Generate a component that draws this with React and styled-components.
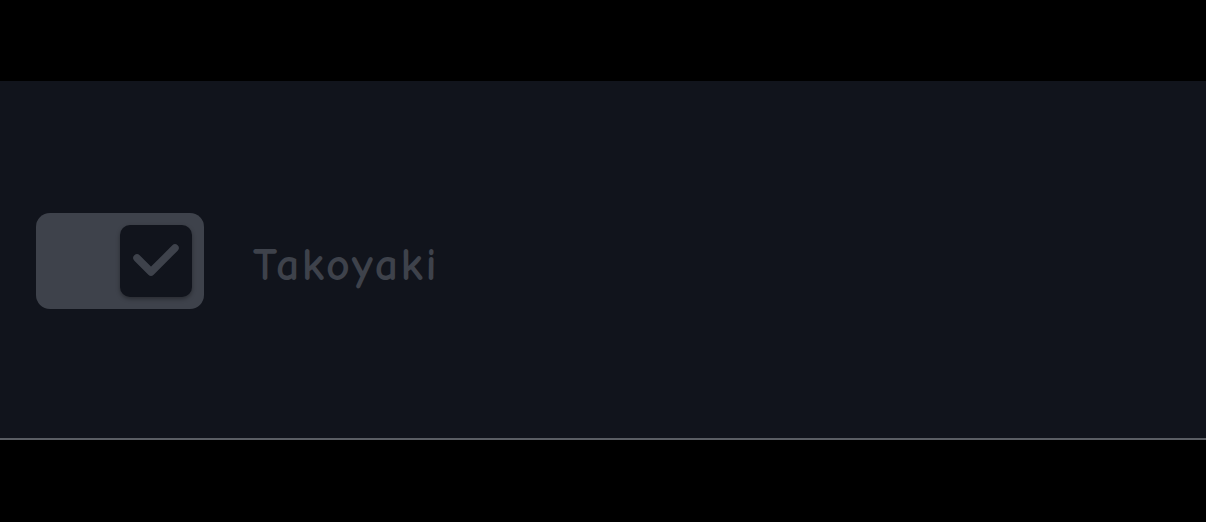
import React from "react";
import styled, { createGlobalStyle } from "styled-components";

const Global = createGlobalStyle`
  html, body { margin: 0; padding: 0; background: #000; }
  body { width: 1206px; height: 522px; overflow: hidden; }
`;

const Page = styled.div`
  padding-top: 81px;
`;

const Panel = styled.div`
  height: 357px;
  background: #11141c;
  border-bottom: 2px solid #5a5d63;
  display: flex;
  align-items: center;
  padding-left: 36px;
  gap: 49px;
  box-sizing: content-box;
`;

const Track = styled.div`
  width: 168px;
  height: 96px;
  border-radius: 14px;
  background: #3e424b;
  display: flex;
  align-items: center;
  justify-content: ${(p) => (p.$on ? "flex-end" : "flex-start")};
  padding: 0 12px;
  box-sizing: border-box;
  margin-top: 2px;
`;

const Thumb = styled.div`
  width: 72px;
  height: 72px;
  border-radius: 10px;
  background: #11141c;
  box-shadow: 0 2px 4px rgba(0, 0, 0, 0.35);
  display: flex;
  align-items: center;
  justify-content: center;
`;

const Label = styled.span`
  font-family: "Comic Sans MS", "Comic Neue", cursive;
  font-size: 46px;
  font-weight: 700;
  letter-spacing: 2.5px;
  color: #3e424b;
  margin-top: 11px;
`;

export default function App() {
  return (
    <>
      <Global />
      <Page>
        <Panel>
          <Track $on>
            <Thumb>
              <svg width="72" height="72" viewBox="0 0 72 72">
                <path
                  d="M17 33 L31 47 L55 23"
                  fill="none"
                  stroke="#3e424b"
                  strokeWidth="7.5"
                  strokeLinecap="round"
                  strokeLinejoin="round"
                />
              </svg>
            </Thumb>
          </Track>
          <Label>Takoyaki</Label>
        </Panel>
      </Page>
    </>
  );
}
